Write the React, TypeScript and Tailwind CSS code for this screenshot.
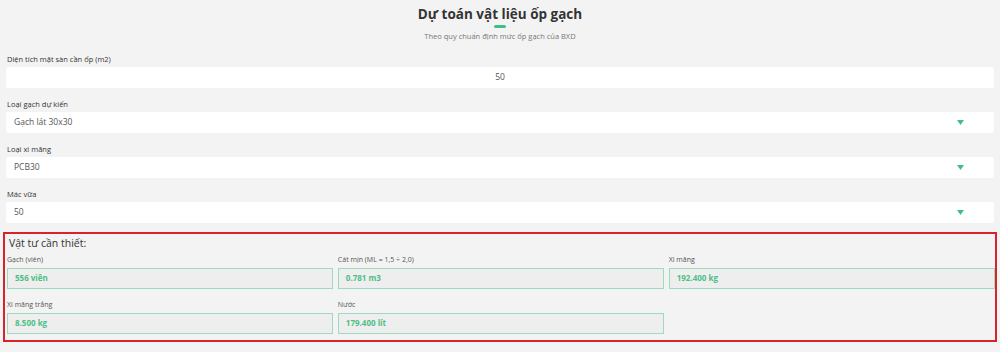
import React from 'react';

const font = { fontFamily: '"Open Sans", "Noto Sans", sans-serif' };

function Arrow() {
  return (
    <svg width="7" height="5" viewBox="0 0 7 5" className="shrink-0">
      <path d="M0 0 H7 L3.5 5 Z" fill="#3fbf82" />
    </svg>
  );
}

function Field({ label, value, select, center }: { label: string; value: string; select?: boolean; center?: boolean }) {
  return (
    <div className="flex flex-col mb-[10px]">
      <label className="h-[14px] flex items-center text-[7.5px] text-[#333] pl-[1px]">{label}</label>
      <div className="h-[21px] bg-white rounded-[2px] flex items-center pl-[8px] pr-[30px] text-[8.5px] text-[#555]">
        <span className={center ? 'flex-1 text-center pl-[22px]' : 'flex-1'}>{value}</span>
        {select && <Arrow />}
      </div>
    </div>
  );
}

function Result({ label, value }: { label: string; value: string }) {
  return (
    <div className="flex flex-col">
      <span className="h-[15px] flex items-center text-[7px] text-[#555]">{label}</span>
      <div className="h-[21px] border border-[#9adcbd] bg-[#eeeeee] flex items-center pl-[7px] text-[8px] font-bold text-[#4cbf86]">
        {value}
      </div>
    </div>
  );
}

export default function App() {
  return (
    <div className="w-full h-[352px] bg-[#f3f3f3] overflow-hidden" style={font}>
      <div className="flex flex-col items-center pt-[4px]">
        <h1 className="text-[13.5px] leading-[20px] font-bold text-[#333]">Dự toán vật liệu ốp gạch</h1>
        <div className="w-[12px] h-[2.5px] bg-[#3fbf87] rounded-full mt-[1px]" />
        <p className="text-[7.5px] leading-[10px] text-[#777] mt-[3px]">Theo quy chuẩn định mức ốp gạch của BXD</p>
      </div>

      <div className="px-[6px] mt-[12px]">
        <Field label="Diện tích mặt sàn cần ốp (m2)" value="50" center />
        <Field label="Loại gạch dự kiến" value="Gạch lát 30x30" select />
        <Field label="Loại xi măng" value="PCB30" select />
        <Field label="Mác vữa" value="50" select />
      </div>

      <div className="mx-[3px] -mt-[1px] border-2 border-[#d8232a] pl-[2px] pb-[6px]">
        <h2 className="h-[19px] flex items-center pl-[2px] pt-[1px] text-[10.5px] font-medium text-[#333]">Vật tư cần thiết:</h2>
        <div className="grid grid-cols-3 gap-x-[4.5px] gap-y-[9px]">
          <Result label="Gạch (viên)" value="556 viên" />
          <Result label="Cát mịn (ML = 1,5 ÷ 2,0)" value="0.781 m3" />
          <Result label="Xi măng" value="192.400 kg" />
          <Result label="Xi măng trắng" value="8.500 kg" />
          <Result label="Nước" value="179.400 lít" />
        </div>
      </div>
    </div>
  );
}
